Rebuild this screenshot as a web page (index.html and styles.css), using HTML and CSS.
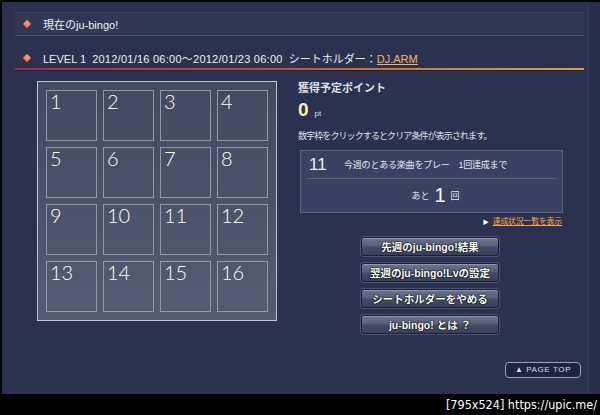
FILE: index.html
```html
<!DOCTYPE html>
<html lang="ja">
<head>
<meta charset="utf-8">
<title>ju-bingo!</title>
<link rel="stylesheet" href="styles.css">
</head>
<body>
<div class="screen">
  <div class="frame">
    <div class="page">
      <div class="sec-head"><span class="dia"></span><span class="sec-title">現在のju-bingo!</span></div>
      <div class="level"><span class="dia"></span><span class="level-text">LEVEL 1&nbsp;&nbsp;<span class="dates">2012/01/16 06:00〜2012/01/23 06:00</span>&nbsp;&nbsp;シートホルダー：<a class="holder">DJ.ARM</a></span></div>
      <div class="main">
        <div class="board">
          <div class="cell">1</div><div class="cell">2</div><div class="cell">3</div><div class="cell">4</div>
          <div class="cell">5</div><div class="cell">6</div><div class="cell">7</div><div class="cell">8</div>
          <div class="cell">9</div><div class="cell">10</div><div class="cell">11</div><div class="cell">12</div>
          <div class="cell">13</div><div class="cell">14</div><div class="cell">15</div><div class="cell">16</div>
        </div>
        <div class="side">
          <div class="pt-title">獲得予定ポイント</div>
          <div class="pt"><b class="pt-num">0</b><span class="pt-unit">pt</span></div>
          <p class="hint">数字枠をクリックするとクリア条件が表示されます。</p>
          <div class="cond">
            <div class="cond-top"><span class="cnum">11</span><span class="ctext">今週のとある楽曲をプレー　1回達成まで</span></div>
            <div class="cond-bottom"><span class="small">あと</span><b class="big">1</b><span class="small">回</span></div>
          </div>
          <div class="more"><span class="tri">▶</span><a class="more-link">達成状況一覧を表示</a></div>
          <div class="btns">
            <button class="btn">先週のju-bingo!結果</button>
            <button class="btn">翌週のju-bingo!Lvの設定</button>
            <button class="btn">シートホルダーをやめる</button>
            <button class="btn">ju-bingo! とは ？</button>
          </div>
        </div>
      </div>
      <div class="pagetop-row"><span class="pagetop">▲ PAGE TOP</span></div>
    </div>
    <div class="rstrip"></div>
  </div>
  <div class="wm">[795x524] https://upic.me/</div>
</div>
</body>
</html>
```

FILE: styles.css
```css
* { box-sizing: border-box; }
html, body { margin: 0; padding: 0; }
body {
  background: #000;
  font-family: "Liberation Sans", "Noto Sans CJK JP", sans-serif;
  color: #e6e8f0;
  width: 600px;
  height: 415px;
  overflow: hidden;
}
.screen { width: 600px; height: 415px; display: flex; flex-direction: column; }
.frame {
  display: flex;
  margin: 2px 0 0 2px;
  height: 392px;
  width: 598px;
  background: #2c3150;
}
.page {
  width: 586px;
  padding: 10px 4px 0 13px;
  display: flex;
  flex-direction: column;
}
.rstrip {
  width: 12px;
  border-left: 1px solid #343a5a;
  background: #292e4b;
}
.sec-head {
  height: 24px;
  background: #323756;
  border-top: 1px solid #3d4264;
  border-bottom: 1px solid #4c5174;
  display: flex;
  align-items: center;
}
.dia {
  width: 6px;
  height: 6px;
  margin-left: 9px;
  margin-right: 13px;
  transform: rotate(45deg);
  background: radial-gradient(circle at 40% 40%, #ffa080, #f06040);
  flex: none;
}
.sec-title { font-size: 11px; color: #f0f0f4; }
.level {
  margin-top: 12px;
  height: 23px;
  display: flex;
  align-items: center;
  padding-bottom: 3px;
  position: relative;
  border-bottom: 1px solid #1e2340;
}
.level::after {
  content: "";
  position: absolute;
  left: 0; right: 0; bottom: 0;
  height: 2px;
  background: linear-gradient(90deg, #a02a58, #b8483e 40%, #c98a34 75%, #d6a838);
}
.level-text { font-size: 11px; color: #eceef4; white-space: nowrap; }
.dates { letter-spacing: 0.25px; }
.holder { color: #f0b860; text-decoration: underline; }
.main { display: flex; margin-top: 10px; }
.board {
  margin-left: 22px;
  width: 240px;
  height: 240px;
  border: 1px solid #c4c7d3;
  background: linear-gradient(#444962, #565b73);
  padding: 8px;
  display: grid;
  grid-template-columns: repeat(4, 51px);
  grid-template-rows: repeat(4, 51px);
  gap: 6px;
}
.cell {
  border: 1px solid #9397ac;
  color: #ffffff;
  font-family: Lato, "Liberation Sans", sans-serif;
  font-weight: 300;
  font-size: 20px;
  line-height: 20px;
  padding-left: 3px;
}
.side { margin-left: 21px; width: 266px; }
.pt-title { font-size: 11px; line-height: 14px; font-weight: bold; color: #dfe1ea; }
.pt { margin-top: 5px; height: 20px; display: flex; align-items: baseline; }
.pt-num { font-size: 19px; line-height: 20px; color: #fcefb6; }
.pt-unit { font-size: 8px; margin-left: 6px; color: #dcdfe8; }
.hint { margin: 10px 0 0; font-size: 9px; line-height: 12px; letter-spacing: -0.9px; color: #dfe1ea; }
.cond {
  margin: 8px 0 0 2px;
  width: 263px;
  height: 63px;
  border: 1px solid #5b6080;
  background: #3b4161;
  padding: 0 6px;
}
.cond-top {
  height: 28px;
  display: flex;
  align-items: center;
  border-bottom: 1px solid #5e6482;
  padding-left: 2px;
}
.cnum { font-size: 17px; color: #eef0f6; width: 35px; }
.ctext { font-size: 9px; letter-spacing: -0.2px; color: #e4e6ee; }
.cond-bottom {
  height: 33px;
  display: flex;
  align-items: center;
  justify-content: center;
  gap: 5px;
  padding-left: 8px;
}
.small { font-size: 9px; color: #e4e6ee; }
.big { font-size: 20px; font-weight: normal; color: #ffffff; }
.more {
  margin-top: 3px;
  width: 264px;
  font-size: 8px;
  line-height: 12px;
  display: flex;
  justify-content: flex-end;
  align-items: center;
}
.tri { font-size: 6px; color: #ffffff; margin-right: 4px; }
.more-link { color: #f0a848; text-decoration: underline; letter-spacing: -0.3px; }
.btns {
  margin: 9px 0 0 63px;
  display: flex;
  flex-direction: column;
  gap: 7px;
}
.btn {
  width: 138px;
  height: 19px;
  padding: 0;
  border: 1px solid #1a1e34;
  border-radius: 3px;
  background: linear-gradient(#6e7390, #595e7a 45%, #454a66 55%, #3a3f5a);
  box-shadow: inset 0 1px 0 rgba(255,255,255,0.25), 0 0 0 1px rgba(110,116,150,0.5);
  color: #ffffff;
  font-family: "Liberation Sans", "Noto Sans CJK JP", sans-serif;
  font-size: 10.5px;
  font-weight: bold;
  text-shadow: 0 0 2px #000, 0 0 1px #000;
}
.pagetop-row {
  margin-top: auto;
  margin-bottom: 16px;
  display: flex;
  justify-content: flex-end;
  padding-right: 3px;
}
.pagetop {
  width: 76px;
  height: 16px;
  border: 1px solid #9ca2c2;
  border-radius: 4px;
  background: #1f2442;
  color: #d8dcf0;
  font-size: 8px;
  line-height: 14px;
  text-align: center;
  letter-spacing: 0.6px;
}
.wm {
  flex: 1;
  text-align: right;
  padding-right: 3px;
  color: #ffffff;
  font-family: "DejaVu Sans Condensed", "DejaVu Sans", sans-serif;
  font-size: 12.5px;
  line-height: 21px;
}
```
